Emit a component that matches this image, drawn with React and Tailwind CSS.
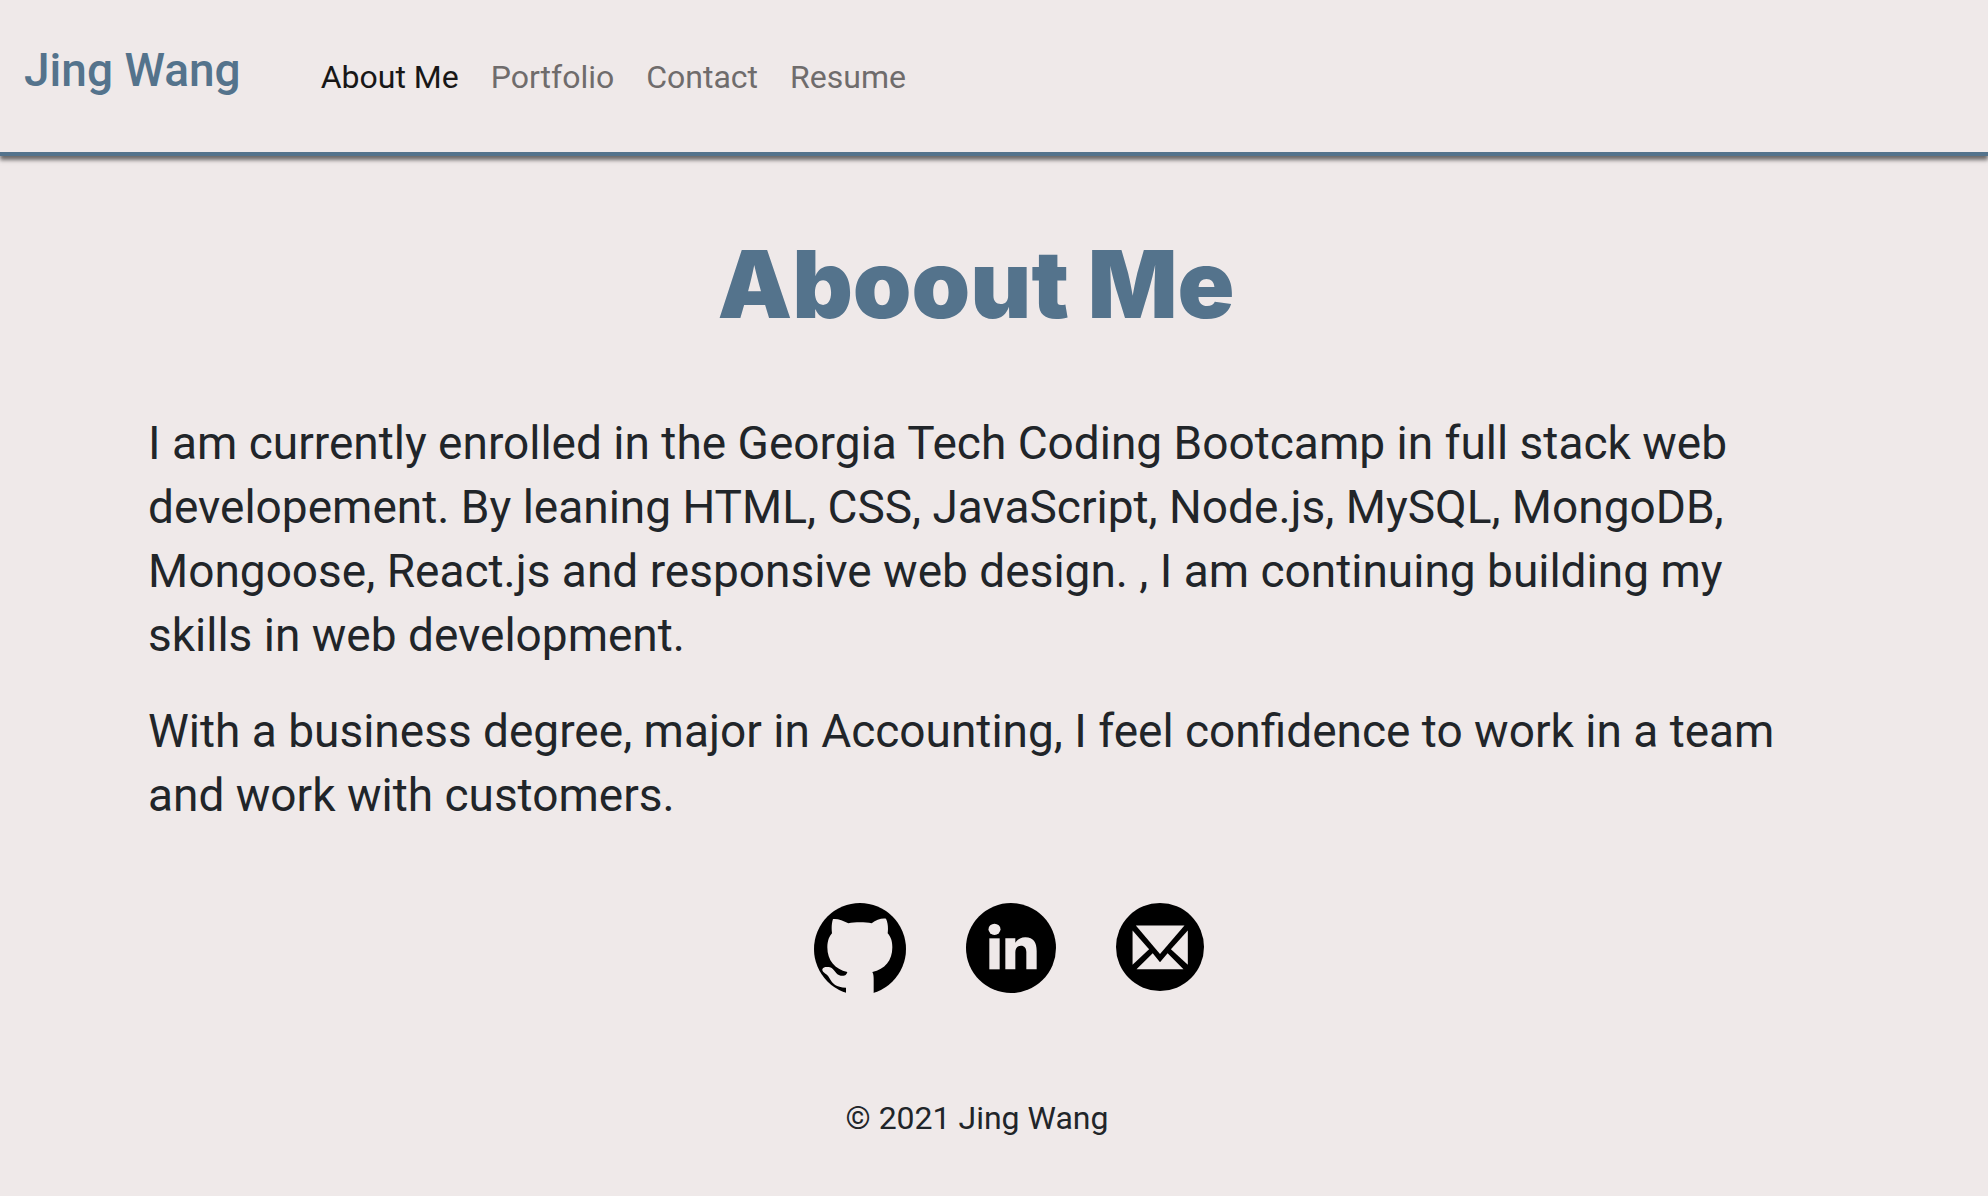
const pages = ["About Me", "Portfolio", "Contact", "Resume"];

function GithubIcon() {
  return (
    <svg viewBox="42 39 276 276" className="size-[92px]" aria-hidden="true">
      <circle cx="180" cy="177" r="138" fill="#000" />
      <path
        fill="#efe9e9"
        d="M138 325V293C108 292 98 282 88 264C82 250 66 248 67 238C69 230 82 230 90 232C105 237 106 255 122 257C136 259 140 253 142 246C105 238 82 212 82 172C82 152 88 139 96 130C94 115 95 98 99 87C112 85 130 92 145 100C165 96 195 96 215 100C228 90 244 84 258 86C264 98 265 115 263 130C272 140 277 152 277 172C277 212 255 238 217 246C221 252 221 262 221 270V325Z"
      />
    </svg>
  );
}

function LinkedinIcon() {
  return (
    <svg viewBox="527 71 270 270" className="size-[90px]" aria-hidden="true">
      <circle cx="662" cy="206" r="135" fill="#000" />
      <g fill="#efe9e9">
        <ellipse cx="612.5" cy="150" rx="18" ry="17" />
        <path d="M597 177H628V270H597Z" />
        <path d="M645 177H675V190C682 180 692 174 705 174C730 174 739 190 739 215V270H708V218C708 206 702 199 692 199C681 199 675 207 675 219V270H645Z" />
      </g>
    </svg>
  );
}

function MailIcon() {
  return (
    <svg viewBox="47 40 266 266" className="size-[88px]" aria-hidden="true">
      <circle cx="180" cy="173" r="133" fill="#000" />
      <g fill="#efe9e9">
        <path d="M107 108H254L180 194Z" />
        <path d="M97 123L147 180L97 227Z" />
        <path d="M264 123L213 180L264 227Z" />
        <path d="M109 240L158 192L180 219L203 192L251 240Z" />
      </g>
    </svg>
  );
}

const contacts = [
  { label: "GitHub", href: "#github", Icon: GithubIcon },
  { label: "LinkedIn", href: "#linkedin", Icon: LinkedinIcon },
  { label: "Email", href: "#email", Icon: MailIcon },
];

export default function App() {
  return (
    <div className="min-h-screen bg-[#efe9e9] pb-10 font-[Roboto,sans-serif] text-[#212529]">
      <header className="flex items-start border-b-4 border-[#54738c] pt-[42px] pb-12 pl-6 shadow-[0_4px_4px_rgba(0,0,0,0.55)]">
        <a href="#home" className="text-[46px] leading-[56px] font-medium text-[#54738c]">
          Jing Wang
        </a>
        <nav className="mt-2 ml-20 flex gap-8 text-[32px] leading-[54px]">
          {pages.map((p, i) => (
            <a key={p} href="#page" className={i === 0 ? "text-[#181717]" : "text-[#6f6c6c]"}>
              {p}
            </a>
          ))}
        </nav>
      </header>
      <main className="pt-[70px] pr-[184px] pl-[148px]">
        <h1 className="text-center font-[Inter,sans-serif] text-[94px] leading-[116px] font-black text-[#54738c]">
          Aboout Me
        </h1>
        <div className="mt-[69px] text-[46px] leading-[64px]">
          <p>
            I am currently enrolled in the Georgia Tech Coding Bootcamp in full stack web
            developement. By leaning HTML, CSS, JavaScript, Node.js, MySQL, MongoDB,
            Mongoose, React.js and responsive web design. , I am continuing building my
            skills in web development.
          </p>
          <p className="mt-8">
            With a business degree, major in Accounting, I feel confidence to work in a team
            and work with customers.
          </p>
        </div>
      </main>
      <footer className="pt-[76px] pr-[184px] pl-[150px]">
        <ul className="flex justify-center gap-[60px] pl-16">
          {contacts.map(({ label, href, Icon }) => (
            <li key={label}>
              <a href={href} aria-label={label} className="block">
                <Icon />
              </a>
            </li>
          ))}
        </ul>
        <p className="mt-[99px] text-center text-[32px] leading-[48px]">© 2021 Jing Wang</p>
      </footer>
    </div>
  );
}
